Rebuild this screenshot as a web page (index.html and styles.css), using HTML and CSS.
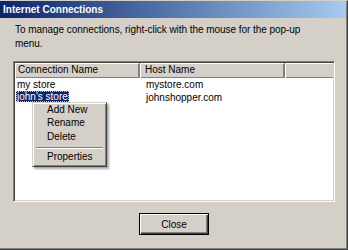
FILE: index.html
```html
<!DOCTYPE html>
<html>
<head>
<meta charset="utf-8">
<link rel="stylesheet" href="styles.css">
</head>
<body>
<div class="window">
  <div class="titlebar"><span class="title">Internet Connections</span></div>
  <div class="content">
    <p class="intro">To manage connections, right-click with the mouse for the pop-up<br>menu.</p>
    <div class="listbox">
      <div class="header">
        <div class="col col-name">Connection Name</div>
        <div class="col col-host">Host Name</div>
        <div class="col col-rest"></div>
      </div>
      <div class="rows">
        <div class="row"><div class="cell cell-name"><span class="txt">my store</span></div><div class="cell">mystore.com</div></div>
        <div class="row"><div class="cell cell-name"><span class="txt selected">john's store</span></div><div class="cell">johnshopper.com</div></div>
      </div>
      <div class="menu">
        <div class="item first">Add New</div>
        <div class="item">Rename</div>
        <div class="item">Delete</div>
        <div class="sep"></div>
        <div class="item">Properties</div>
      </div>
    </div>
    <div class="footer">
      <button class="btn">Close</button>
    </div>
  </div>
</div>
</body>
</html>
```
FILE: styles.css
```css
* { box-sizing: border-box; }
html, body { margin: 0; padding: 0; background: #d4d0c8; }
body { font-family: "Liberation Sans", Arial, sans-serif; font-size: 10px; color: #000; }
.window {
  width: 348px; height: 250px; background: #d4d0c8;
  border-top: 1px solid #d4d0c8;
  border-right: 1px solid #404040;
  border-bottom: 1px solid #404040;
  box-shadow: inset -1px -1px 0 #808080;
  display: flex; flex-direction: column;
}
.titlebar {
  height: 17px; margin-right: 1px;
  background: linear-gradient(to right, #0a246a, #a6caf0);
  display: flex; align-items: center; padding-left: 3px;
}
.title { color: #fff; font-weight: bold; font-size: 10px; }
.content { flex: 1; padding: 0 12px 0 13px; display: flex; flex-direction: column; }
.intro { margin: 5px 0 0 2px; line-height: 14px; white-space: nowrap; letter-spacing: -0.05px; }
.listbox {
  position: relative;
  margin-top: 10px; height: 141px; width: 322px;
  background: #fff;
  border-top: 1px solid #808080; border-left: 1px solid #808080;
  border-right: 1px solid #fff; border-bottom: 1px solid #fff;
  box-shadow: inset 1px 1px 0 #404040, inset -1px -1px 0 #d4d0c8;
  padding: 1px;
}
.header { display: flex; height: 15px; }
.col {
  background: #d4d0c8; height: 15px; line-height: 14px; padding-left: 3px;
  border-right: 1px solid #808080;
  box-shadow: inset 1px 1px 0 #fff, inset -1px -1px 0 #808080;
}
.col-name { width: 125px; }
.col-host { width: 145px; padding-left: 5px; }
.col-rest { flex: 1; border-right: none; box-shadow: inset 1px 1px 0 #fff, inset 0 -1px 0 #808080; }
.rows { padding-top: 0; }
.row { display: flex; height: 13px; line-height: 13px; }
.cell { padding-left: 1px; }
.cell-name { width: 130px; }
.txt { padding: 0 1px; display: inline-block; }
.selected { background: #0a246a; color: #fff; outline: 1px dotted #c0c0c0; outline-offset: -1px; line-height: 11px; margin-top: 0; vertical-align: top; }
.menu {
  position: absolute; left: 18px; top: 40px;
  width: 75px; padding: 0 2px 2px;
  background: #d4d0c8;
  border-top: 1px solid #d4d0c8; border-left: 1px solid #d4d0c8;
  border-right: 1px solid #404040; border-bottom: 1px solid #404040;
  box-shadow: inset 1px 1px 0 #fff, inset -1px -1px 0 #808080, 2px 2px 2px rgba(0,0,0,0.35);
}
.item { height: 14px; line-height: 14px; padding-left: 12px; }
.item.first { height: 13px; line-height: 13px; }
.sep { height: 2px; margin: 3px 1px 1px; border-top: 1px solid #808080; border-bottom: 1px solid #fff; }
.footer { flex: 1; display: flex; justify-content: center; align-items: flex-start; padding-top: 11px; }
.btn {
  width: 70px; height: 22px; font: inherit; color: #000;
  background: #d4d0c8;
  border: 1px solid #000;
  box-shadow: inset 1px 1px 0 #fff, inset -1px -1px 0 #404040, inset -2px -2px 0 #808080;
  padding: 0;
}
```
